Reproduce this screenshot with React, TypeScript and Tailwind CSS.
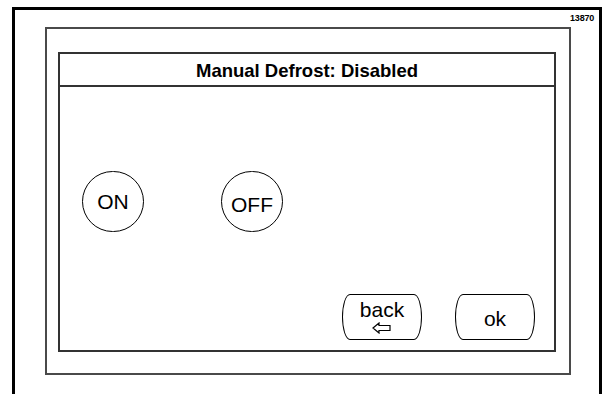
const font = { fontFamily: '"Liberation Sans", Arial, sans-serif' }

function RoundButton({ label, shift = 0 }: { label: string; shift?: number }) {
  return (
    <div className="w-[62px] h-[61px] rounded-full border-[1.2px] border-black flex items-center justify-center">
      <span className={`text-[21px] leading-none text-black ${shift ? 'mt-[5px]' : 'mb-[1px]'}`}>{label}</span>
    </div>
  )
}

function BarrelButton({ children }: { children: React.ReactNode }) {
  return (
    <div className="w-[80px] h-[46px] border-[1.2px] border-black rounded-[8px/50%] flex flex-col items-center justify-center">
      {children}
    </div>
  )
}

export default function App() {
  return (
    <div className="w-[602px] h-[394px] bg-white overflow-hidden pl-[12px] pt-[7px]" style={font}>
      {/* outer frame */}
      <div className="relative h-[400px] border-l-[3px] border-t-[3px] border-r-[3px] border-black pl-[30px] pt-[17px] pr-[28px]">
        <span className="absolute top-[4px] right-[5px] text-[9px] font-semibold leading-none text-black tracking-tight">13870</span>

        {/* middle frame */}
        <div className="w-[526px] h-[348px] border-2 border-[#4a4a4a] pl-[11px] pt-[23px]">
          {/* panel */}
          <div className="w-[498px] h-[300px] border-2 border-[#333] flex flex-col">
            <div className="h-[33px] border-b-2 border-[#333] flex items-center justify-center pt-[3px]">
              <h1 className="text-[18.5px] font-bold text-black leading-none">Manual Defrost: Disabled</h1>
            </div>

            <div className="flex-1 flex flex-col px-[22px] pt-[84px] pb-[10px]">
              <div className="flex items-center gap-[77px]">
                <RoundButton label="ON" />
                <RoundButton label="OFF" shift={1} />
              </div>

              <div className="mt-auto flex justify-end gap-[33px] mr-[-3px]">
                <BarrelButton>
                  <span className="text-[21px] leading-none text-black -mt-[2px]">back</span>
                  <svg width="20" height="12" viewBox="0 0 20 12" className="mt-[2px]">
                    <path d="M1 6 L7 1 V3.5 H18 V8.5 H7 V11 Z" fill="none" stroke="black" strokeWidth="1.2" strokeLinejoin="miter" />
                  </svg>
                </BarrelButton>
                <BarrelButton>
                  <span className="text-[21px] leading-none text-black mt-[3px]">ok</span>
                </BarrelButton>
              </div>
            </div>
          </div>
        </div>
      </div>
    </div>
  )
}
